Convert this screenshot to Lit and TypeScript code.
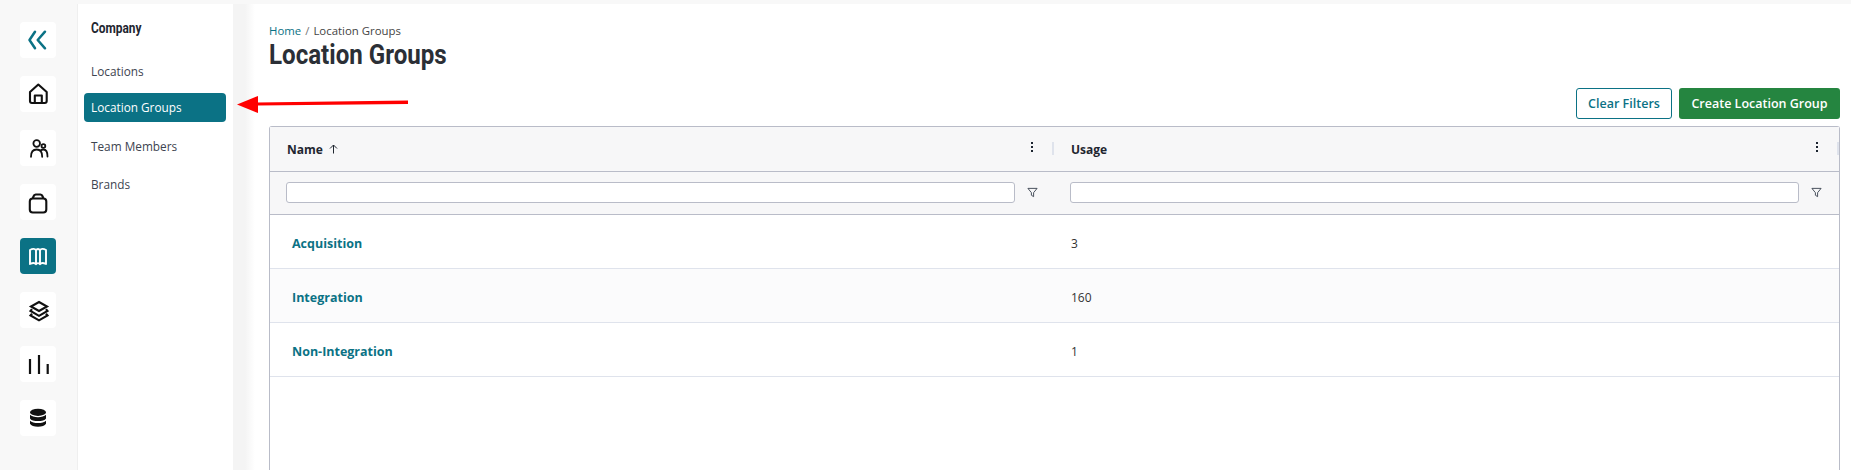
import { LitElement, html, css, svg } from "lit";
import { customElement } from "lit/decorators.js";

const icons = [
  svg`<path d="M15 9.700 9.500 18l5.500 8.300M25 9.700 17.700 18l7.300 8.300" fill="none" stroke="#0b7285" stroke-width="2.500" stroke-linecap="round" stroke-linejoin="round"/>`,
  svg`<path d="M10 16 18.300 8.500 26.700 16v9a2 2 0 0 1-2 2H12a2 2 0 0 1-2-2ZM14.800 27v-7.500h7V27" fill="none" stroke="#111" stroke-width="2.100" stroke-linejoin="round"/>`,
  svg`<g fill="none" stroke="#111" stroke-width="1.800" stroke-linecap="round"><circle cx="16.700" cy="13.500" r="3.300"/><circle cx="23.400" cy="16" r="1.900"/><path d="M11 26.800c0-4.800 2.300-7.300 5.700-7.300s5.500 2.500 5.500 7.300M20.500 20.500c.9-.7 2-1 3-1 2.600 0 4 2.500 4 7"/></g>`,
  svg`<path d="M9.800 17.500a3 3 0 0 1 3-3h10.500a3 3 0 0 1 3 3v8a3 3 0 0 1-3 3H12.800a3 3 0 0 1-3-3ZM12.500 14.500 14 11.500a2.500 2.500 0 0 1 1.800-1h4.500a2.500 2.500 0 0 1 1.800 1l1.500 3" fill="none" stroke="#111" stroke-width="2.100" stroke-linejoin="round"/>`,
  svg`<path d="M10 12c2.500-1.500 5-1.500 6 .3 1-1.800 3-1.800 4 0 1-1.800 3.500-1.800 6-.3v14c-2.500-1.300-5-1.300-6 .3-1-1.600-3-1.600-4 0-1-1.600-3.500-1.600-6-.3ZM16 12.300v14M20 12.300v14" fill="none" stroke="#fff" stroke-width="1.900" stroke-linejoin="round"/>`,
  svg`<g fill="none" stroke="#111" stroke-width="2.100" stroke-linejoin="miter"><path d="M19 10 27 14.500 19 19 11 14.500Z"/><path d="M12 17.200 10.500 19 19 23.800 27.500 19 26 17.200"/><path d="M12 21.800 10.500 23.500 19 28.300 27.500 23.500 26 21.800"/></g>`,
  svg`<g fill="none" stroke="#111" stroke-width="2.200"><path d="M10 13v15M19 9v19M27.700 18v10"/></g>`,
  svg`<g fill="#111"><ellipse cx="18" cy="12.300" rx="8" ry="3.600"/><path d="M10 14.800c1.600 1.700 4.500 2.400 8 2.400s6.400-.7 8-2.400v3.600c-1 1.800-4.200 2.700-8 2.700s-7-.9-8-2.700ZM10 20.800c1.600 1.600 4.500 2.300 8 2.300s6.400-.7 8-2.300v2.900c-1 1.800-4.200 3.100-8 3.100s-7-1.300-8-3.100Z"/></g>`,
];

const kebab = html`<svg class="kebab" viewBox="0 0 4 12" width="4" height="12"><g fill="#1c2430"><rect x="1" y="1" width="2" height="2"/><rect x="1" y="5" width="2" height="2"/><rect x="1" y="9" width="2" height="2"/></g></svg>`;
const funnel = html`<svg viewBox="0 0 12 12" width="11" height="11"><path d="M1 1.500h10L7.200 6.200V10.500L4.800 9V6.200Z" fill="none" stroke="#3a4350" stroke-width="1"/></svg>`;

@customElement("app-root")
export class AppRoot extends LitElement {
  static styles = css`
    :host { display: block; height: 470px; overflow: hidden; position: relative; background: #f8f8f8;
      font-family: "Open Sans", "Noto Sans", sans-serif; font-size: 13px; color: #333; }
    .shell { display: grid; grid-template-columns: 77px 156px 22px 1fr; height: 466px; padding-top: 4px; }
    .rail { display: flex; flex-direction: column; gap: 18px; padding: 18px 0 0 20px; }
    .rail-btn { width: 36px; height: 36px; background: #fff; border-radius: 4px; }
    .rail-btn.active { background: #0b7285; }
    .rail-btn svg { display: block; width: 36px; height: 36px; }
    .panel { background: #fff; border-left: 1px solid #efefef; padding: 0 7px 0 6px; box-sizing: border-box; }
    .narrow { display: block; font-family: "Roboto", sans-serif; font-weight: 700; transform-origin: left center; white-space: nowrap; }
    .panel h2 { font-size: 14px; color: #1f2630; margin: 0; padding: 16px 0 0 7px; line-height: 17px; transform: scaleX(0.85); transform-origin: 7px center; }
    .nav { display: flex; flex-direction: column; margin-top: 20px; font-size: 11.800px; }
    .nav a { display: flex; align-items: center; box-sizing: border-box; padding: 0 0 2px 7px; height: 29px; border-radius: 4px; color: #3d4450; margin-bottom: 9px; }
    .nav a.on { background: #0b7285; color: #fff; margin-top: -2px; margin-bottom: 10px; padding-bottom: 1px; }
    .gutter { background: linear-gradient(to right, #f4f4f4 55%, #fff 100%); }
    .main { background: #fff; padding: 19px 11px 0 14px; min-width: 0; display: flex; flex-direction: column; }
    .crumb { font-size: 11.400px; line-height: 16px; color: #444; }
    .crumb a { color: #0b7285; }
    .crumb i { font-style: normal; color: #777; padding: 0 4px; }
    h1 { font-size: 27px; line-height: 30px; color: #2b2f36; margin: 1px 0 0; transform: scaleX(0.893); }
    .actions { display: flex; justify-content: flex-end; gap: 7px; margin-top: 18px; }
    .btn { height: 31px; box-sizing: border-box; border-radius: 3px; display: flex; align-items: center; justify-content: center; font-weight: 600; font-size: 12.500px; }
    .clear { width: 96px; border: 1px solid #0b7285; color: #0b7285; background: #fff; }
    .create { width: 161px; background: #258540; color: #fff; }
    .table { margin-top: 7px; flex: 1; border: 1px solid #b9bcc8; border-bottom: 0; border-radius: 3px 3px 0 0; }
    .row { display: grid; grid-template-columns: 784px 1fr; }
    .head { height: 45px; background: #f7f7f8; border-bottom: 1px solid #b9bcc8; box-sizing: border-box; }
    .hcell { display: flex; align-items: center; padding-left: 17px; font-weight: 700; font-size: 12px; color: #1f2630; position: relative; }
    .hcell .arrow { margin-left: 6px; }
    .hcell .kebab { position: absolute; right: 20px; top: 14px; }
    .hcell .sep { position: absolute; right: 0; top: 15px; height: 13px; width: 2px; background: #dfe3ec; }
    .filters { height: 43px; background: #f7f7f8; border-bottom: 1px solid #b9bcc8; box-sizing: border-box; padding-bottom: 2px; }
    .fcell { display: flex; align-items: center; padding-left: 16px; gap: 12px; }
    .input { flex: none; width: 729px; height: 21px; box-sizing: border-box; background: #fff; border: 1px solid #b9bcc8; border-radius: 3px; }
    .data { height: 54px; border-bottom: 1px solid #dfe3ec; box-sizing: border-box; align-items: center; padding-top: 3px; }
    .data.alt { background: #fbfbfc; }
    .data a { color: #0b7285; font-weight: 700; font-size: 12.500px; padding-left: 22px; }
    .data span { padding-left: 17px; font-size: 12px; color: #333; }
    .pointer { position: absolute; left: 236px; top: 94px; }
  `;

  render() {
    const rows = [["Acquisition", "3"], ["Integration", "160"], ["Non-Integration", "1"]];
    return html`
      <div class="shell">
        <div class="rail">
          ${icons.map((p, i) => html`<div class="rail-btn ${i === 4 ? "active" : ""}"><svg viewBox="0 0 36 36">${p}</svg></div>`)}
        </div>
        <div class="panel">
          <h2 class="narrow">Company</h2>
          <div class="nav">
            <a>Locations</a>
            <a class="on">Location Groups</a>
            <a>Team Members</a>
            <a>Brands</a>
          </div>
        </div>
        <div class="gutter"></div>
        <div class="main">
          <div class="crumb"><a>Home</a><i>/</i>Location Groups</div>
          <h1 class="narrow">Location Groups</h1>
          <div class="actions">
            <div class="btn clear">Clear Filters</div>
            <div class="btn create">Create Location Group</div>
          </div>
          <div class="table">
            <div class="row head">
              <div class="hcell">Name<svg class="arrow" width="9" height="10" viewBox="0 0 9 10"><path d="M4.500 9.500V1M1 4.500 4.500 1 8 4.500" fill="none" stroke="#1f2630" stroke-width="1"/></svg>${kebab}<div class="sep"></div></div>
              <div class="hcell">Usage${kebab}<div class="sep"></div></div>
            </div>
            <div class="row filters">
              <div class="fcell"><div class="input"></div>${funnel}</div>
              <div class="fcell"><div class="input"></div>${funnel}</div>
            </div>
            ${rows.map((r, i) => html`<div class="row data ${i === 1 ? "alt" : ""}"><a>${r[0]}</a><span>${r[1]}</span></div>`)}
          </div>
        </div>
      </div>
      <svg class="pointer" width="174" height="22" viewBox="0 0 174 22"><path d="M21 8.500 172 6.500V10L21 11.500Z" fill="#f00"/><path d="M1 10.500 22 2V19Z" fill="#f00"/></svg>
    `;
  }
}
